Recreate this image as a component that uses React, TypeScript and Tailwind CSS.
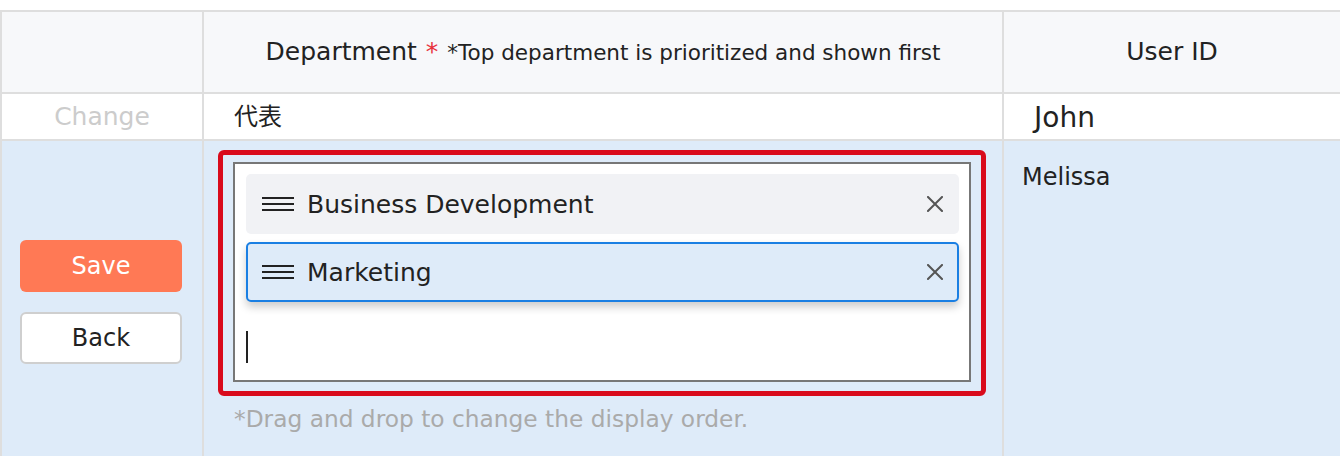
const font = { fontFamily: '"DejaVu Sans", "Noto Sans CJK JP", sans-serif' };

function Handle() {
  return (
    <svg width="32" height="14" viewBox="0 0 32 14" className="shrink-0">
      <rect x="0" y="0" width="32" height="2" fill="#222" />
      <rect x="0" y="6" width="32" height="2" fill="#222" />
      <rect x="0" y="12" width="32" height="2" fill="#222" />
    </svg>
  );
}

function Cross() {
  return (
    <svg width="16" height="16" viewBox="0 0 16 16" className="shrink-0">
      <path d="M1 1L15 15M15 1L1 15" stroke="#555" strokeWidth="2" strokeLinecap="square" />
    </svg>
  );
}

function DeptItem({ name, active }: { name: string; active?: boolean }) {
  return (
    <div
      className={
        active
          ? "h-[60px] flex items-center rounded-[5px] border-2 border-[#1a7fe3] bg-[#deebf9] pl-[14px] pr-[14px] shadow-[0_5px_9px_rgba(0,0,0,0.2)]"
          : "h-[60px] flex items-center rounded-[5px] bg-[#f1f2f5] pl-4 pr-4"
      }
    >
      <Handle />
      <span className="ml-[13px] text-[25px] text-[#222] flex-1 leading-none">{name}</span>
      <Cross />
    </div>
  );
}

export default function App() {
  return (
    <div className="w-[1340px] h-[456px] bg-white pt-[10px] overflow-hidden" style={font}>
      <div className="grid grid-cols-[200px_798px_1fr] gap-[2px] bg-[#dedede] pt-[2px] pl-[2px]">
        {/* header */}
        <div className="h-[80px] bg-[#f7f8fa]" />
        <div className="h-[80px] bg-[#f7f8fa] flex items-center justify-center text-[#222]">
          <span className="text-[25px]">Department</span>
          <span className="text-[25px] text-[#e8333a] ml-[9px]">*</span>
          <span className="text-[21.5px] ml-[9px] pt-[2px]">*Top department is prioritized and shown first</span>
        </div>
        <div className="h-[80px] bg-[#f7f8fa] flex items-center justify-center text-[25px] text-[#222]">
          User ID
        </div>

        {/* row 1 */}
        <div className="h-[45px] bg-white flex items-center justify-center text-[25px] text-[#cccccc]">
          Change
        </div>
        <div className="h-[45px] bg-white flex items-center pl-[30px] text-[24px] text-[#222]">
          代表
        </div>
        <div className="h-[45px] bg-white flex items-center pl-[30px] pt-[3px] text-[28px] text-[#222]">
          John
        </div>

        {/* row 2 (editing) */}
        <div className="h-[322px] bg-[#deebf9] flex flex-col items-center justify-center gap-5 pl-[18px] pr-5">
          <button className="w-[162px] h-[52px] rounded-[6px] bg-[#ff7955] text-white text-[24px]">Save</button>
          <button className="w-[162px] h-[52px] rounded-[6px] bg-white border-2 border-[#cfcfcf] text-[#222] text-[24px]">
            Back
          </button>
        </div>
        <div className="h-[322px] bg-[#deebf9] pt-[9px] pl-[14px] pr-[16px]">
          <div className="rounded-[6px] border-[5px] border-[#d90b1c] pt-[7px] px-[10px] pb-[9px]">
            <div className="h-[220px] border-2 border-[#777] bg-white p-[10px] pl-[11px]">
              <div className="flex flex-col gap-2">
                <DeptItem name="Business Development" />
                <DeptItem name="Marketing" active />
              </div>
              <div className="h-[32px] w-[2px] bg-[#222] mt-[29px]" />
            </div>
          </div>
          <div className="mt-[6px] pl-[16px] text-[23.3px] text-[#aaaaaa]">*Drag and drop to change the display order.</div>
        </div>
        <div className="h-[322px] bg-[#deebf9] pl-[18px] pt-[24px] text-[24px] text-[#222] leading-none">Melissa</div>
      </div>
    </div>
  );
}
